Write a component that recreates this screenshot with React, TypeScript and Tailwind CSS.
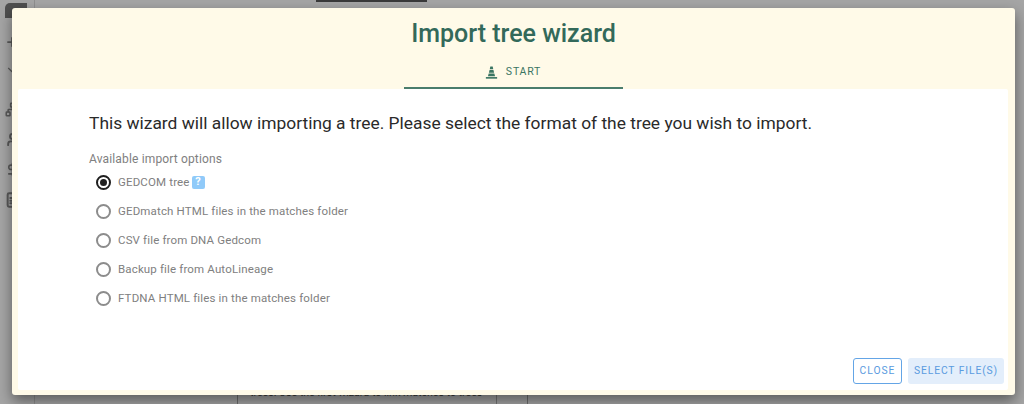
import React from "react";
import { Plus, Network, User, DollarSign, ChevronDown, FileText } from "lucide-react";

const options = [
  "GEDCOM tree",
  "GEDmatch HTML files in the matches folder",
  "CSV file from DNA Gedcom",
  "Backup file from AutoLineage",
  "FTDNA HTML files in the matches folder",
];

const Radio = ({ checked }: { checked: boolean }) => (
  <span
    className={`flex h-[15px] w-[15px] shrink-0 items-center justify-center rounded-full border-2 ${
      checked ? "border-[#1f1f1f]" : "border-[#8c8c8c]"
    }`}
  >
    {checked && <span className="h-[7px] w-[7px] rounded-full bg-[#1f1f1f]" />}
  </span>
);

const ConeIcon = () => (
  <svg viewBox="0 0 12 12" className="h-[13px] w-[13px]" fill="#3a7562">
    <path d="M4.9 0.4h2.2l0.5 2.5h-3.2z" />
    <path d="M4.2 3.6h3.6l0.6 2.7h-4.8z" />
    <path d="M3.4 7h5.2l0.7 2.5h-6.6z" />
    <path d="M0.8 10.2h10.4v1.5h-10.4z" />
  </svg>
);

const Backdrop = () => (
  <div className="flex h-full w-full bg-[#a5a5a5]">
    <div className="flex w-[35px] shrink-0 flex-col items-start border-r border-[#8f8f8f] pl-[5px] pt-[3px] text-[#5a5a5a]">
      <div className="h-[15px] w-[22px] shrink-0 rounded-tl-[5px] bg-[#4f4f4f]" />
      <Plus size={14} strokeWidth={3} className="mt-[17px] shrink-0" />
      <ChevronDown size={14} className="mt-[14px] shrink-0" />
      <Network size={15} strokeWidth={2.5} className="mt-[25px] shrink-0" />
      <User size={15} strokeWidth={3} className="mt-[15px] shrink-0" />
      <DollarSign size={15} strokeWidth={2.5} className="mt-[15px] shrink-0" />
      <FileText size={16} strokeWidth={3} className="mt-[15px] shrink-0" />
    </div>
    <div className="relative flex-1">
      <div className="ml-[281px] h-[2px] w-[111px] bg-[#3a3a3a]" />
      <div className="absolute bottom-[5px] left-[215px] whitespace-nowrap text-[10.6px] leading-[12px] text-[#333]">
        trees. Use the first wizard to link matches to trees
      </div>
      <div className="absolute bottom-0 left-[202px] h-[9px] w-px bg-[#6f6f6f]" />
      <div className="absolute bottom-0 left-[461px] h-[9px] w-px bg-[#777]" />
      <div className="absolute bottom-0 left-[492px] h-[9px] w-px bg-[#6f6f6f]" />
    </div>
  </div>
);

export default function App() {
  return (
    <div className="relative h-[404px] w-[1024px] overflow-hidden font-['Roboto',sans-serif]">
      <Backdrop />
      <div className="absolute left-[12px] top-[8px] flex h-[387px] w-[1003px] flex-col rounded-[3px] bg-[#fffae8] pb-[5px] pl-[6px] pr-[7px] shadow-[0_6px_14px_rgba(0,0,0,0.45)]">
        <header className="flex h-[81px] shrink-0 flex-col items-center">
          <h1 className="mt-[9px] pl-[1px] text-[25px] font-medium leading-[33px] text-[#33695a]">Import tree wizard</h1>
          <div className="mt-[6px] flex h-[33px] w-[219px] items-center justify-center gap-[8px] border-b-2 border-[#4a7d6c] pt-[1px]">
            <ConeIcon />
            <span className="text-[10.5px] tracking-[0.8px] text-[#3a7562]">START</span>
          </div>
        </header>
        <main className="relative flex-1 rounded-[2px] bg-white pl-[71px] pt-[22px]">
          <p className="text-[17.4px] leading-[24px] text-[#2a2a2a]">
            This wizard will allow importing a tree. Please select the format of the tree you wish to import.
          </p>
          <p className="mt-[16px] text-[12px] leading-[16px] tracking-[0.15px] text-[#808080]">Available import options</p>
          <ul className="ml-[7px] mt-[1px] flex flex-col">
            {options.map((option, i) => (
              <li key={option} className="flex h-[29px] items-center gap-[7px]">
                <Radio checked={i === 0} />
                <span className="text-[11.5px] tracking-[0.15px] text-[#808080]">{option}</span>
                {i === 0 && (
                  <span className="-ml-[5px] flex h-[13px] w-[13px] items-center justify-center rounded-[2px] bg-[#90caf9] text-[11px] font-bold text-white">
                    ?
                  </span>
                )}
              </li>
            ))}
          </ul>
          <div className="absolute bottom-[6px] right-[4px] flex gap-[6px]">
            <button className="h-[26px] w-[49px] rounded-[3px] border border-[#64a5e6] text-[10.3px] tracking-[1px] text-[#5a9be0]">
              CLOSE
            </button>
            <button className="h-[26px] w-[96px] rounded-[3px] bg-[#e3eefb] text-[10.3px] tracking-[0.9px] text-[#5a9be0]">
              SELECT FILE(S)
            </button>
          </div>
        </main>
      </div>
    </div>
  );
}
